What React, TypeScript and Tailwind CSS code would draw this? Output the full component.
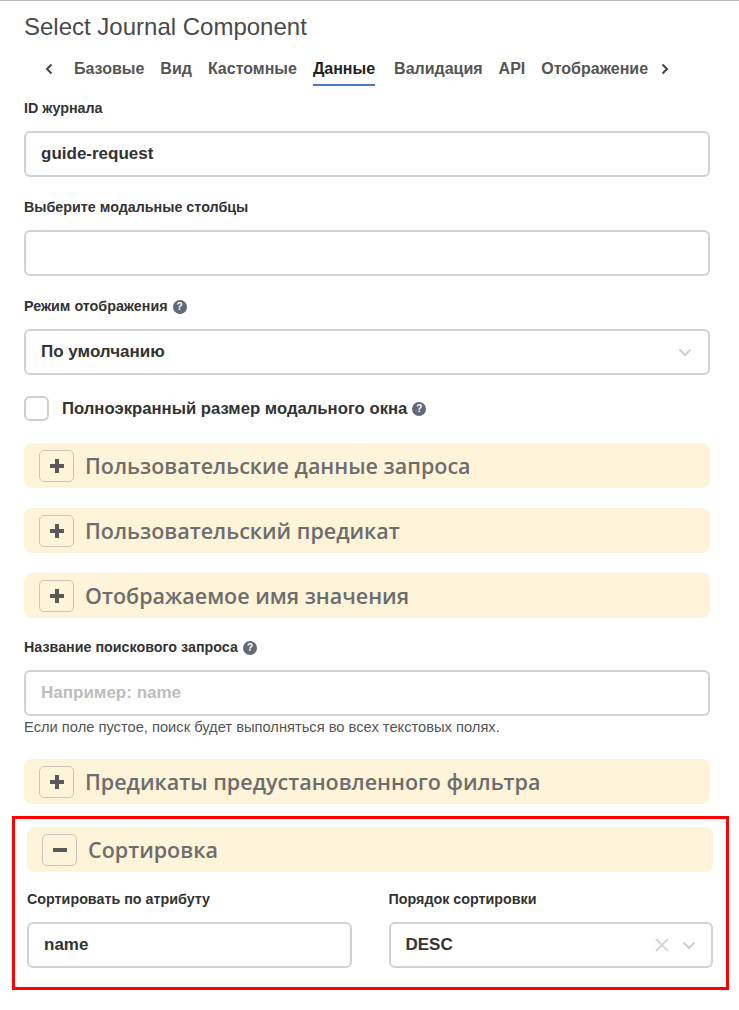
import React from "react";

const tabs = ["Базовые", "Вид", "Кастомные", "Данные", "Валидация", "API", "Отображение"];

const Help = () => (
  <span className="inline-flex items-center justify-center w-[14px] h-[14px] rounded-full bg-[#626a73] text-white text-[10px] font-bold leading-none ml-[5px] shrink-0">
    ?
  </span>
);

const Chevron = ({ className = "" }: { className?: string }) => (
  <svg width="14" height="9" viewBox="0 0 14 9" className={className}>
    <path d="M1.5 1.5 L7 7 L12.5 1.5" fill="none" stroke="#cfcfcf" strokeWidth="2" />
  </svg>
);

const Label = ({ children }: { children: React.ReactNode }) => (
  <div className="h-[20px] flex items-center text-[14.3px] font-bold text-[#333] mb-[12px]">{children}</div>
);

const Input = ({ value, placeholder }: { value?: string; placeholder?: string }) => (
  <div className="h-[46px] border-2 border-[#d2d2d2] rounded-[6px] flex items-center px-[15px] text-[17px] font-bold">
    {value ? (
      <span className="text-[#333]">{value}</span>
    ) : (
      <span className="text-[#bdbdbd]">{placeholder}</span>
    )}
  </div>
);

const Panel = ({ title, open = false }: { title: string; open?: boolean }) => (
  <div className="h-[45px] bg-[#fef4d9] rounded-[8px] flex items-center pl-[15px]">
    <div className="w-[35px] h-[32px] border border-[#cac6bc] rounded-[5px] flex items-center justify-center shrink-0">
      <svg width="16" height="16" viewBox="0 0 16 16">
        <rect x="1" y="6" width="14" height="4" fill="#5a5a5a" />
        {!open && <rect x="6" y="1" width="4" height="14" fill="#5a5a5a" />}
      </svg>
    </div>
    <span
      className="ml-[11px] text-[21.5px] font-semibold text-[#6d6d6d] leading-none"
      style={{ fontFamily: "'Open Sans', sans-serif" }}
    >
      {title}
    </span>
  </div>
);

export default function App() {
  return (
    <div
      className="w-[739px] min-h-[1010px] bg-white border-t border-[#bdbdbd]"
      style={{ fontFamily: "'Liberation Sans', Arial, sans-serif" }}
    >
      <div className="pl-6 pr-[29px]">
        <div className="pt-[11px] text-[24px] leading-[30px] text-[#4a4a4a]">Select Journal Component</div>

        <div className="mt-[10px] flex items-end pl-[21px] text-[16px] font-bold">
          <div className="pt-[7px] pb-[7px] leading-[20px] mr-[21px] flex items-center h-[34px]">
            <svg width="8" height="12" viewBox="0 0 8 12">
              <path d="M6.5 1.5 L2 6 L6.5 10.5" fill="none" stroke="#444" strokeWidth="2" />
            </svg>
          </div>
          {tabs.map((t) => (
            <div
              key={t}
              className={
                t === "Данные"
                  ? "pt-[7px] pb-[5px] leading-[20px] mr-[19px] text-[#222] border-b-2 border-[#4a78c0]"
                  : "pt-[7px] pb-[5px] leading-[20px] mr-[16px] text-[#555] border-b-2 border-transparent"
              }
            >
              {t}
            </div>
          ))}
          <div className="pt-[7px] pb-[7px] leading-[20px] -ml-[3px] flex items-center h-[34px]">
            <svg width="8" height="12" viewBox="0 0 8 12">
              <path d="M1.5 1.5 L6 6 L1.5 10.5" fill="none" stroke="#444" strokeWidth="2" />
            </svg>
          </div>
        </div>

        <div className="mt-[13px]">
          <Label>ID журнала</Label>
          <Input value="guide-request" />
        </div>

        <div className="mt-[21px]">
          <Label>Выберите модальные столбцы</Label>
          <Input />
        </div>

        <div className="mt-[21px]">
          <Label>
            Режим отображения
            <Help />
          </Label>
          <div className="h-[46px] border-2 border-[#d2d2d2] rounded-[6px] flex items-center justify-between pl-[15px] pr-[16px] text-[17px] font-bold text-[#333]">
            <span>По умолчанию</span>
            <Chevron />
          </div>
        </div>

        <div className="mt-[21px] flex items-center h-[25px]">
          <div className="w-[25px] h-[25px] border-2 border-[#cfcfcf] rounded-[6px]" />
          <span className="ml-[13px] text-[16.7px] font-bold text-[#333] flex items-center">
            Полноэкранный размер модального окна
            <Help />
          </span>
        </div>

        <div className="mt-[22px] flex flex-col gap-[20px]">
          <Panel title="Пользовательские данные запроса" />
          <Panel title="Пользовательский предикат" />
          <Panel title="Отображаемое имя значения" />
        </div>

        <div className="mt-[20px]">
          <Label>
            Название поискового запроса
            <Help />
          </Label>
          <Input placeholder="Например: name" />
          <div className="mt-[2px] text-[14.7px] leading-[18px] text-[#555]">
            Если поле пустое, поиск будет выполняться во всех текстовых полях.
          </div>
        </div>

        <div className="mt-[23px]">
          <Panel title="Предикаты предустановленного фильтра" />
        </div>

        <div className="mt-[12px] -ml-3 -mr-[19px] border-[3px] border-[#ff0000] pt-[8px] pb-[19px] pl-[12px] pr-[13px]">
          <Panel title="Сортировка" open />
          <div className="mt-[18px] grid grid-cols-2 gap-[37px]">
            <div>
              <Label>Сортировать по атрибуту</Label>
              <Input value="name" />
            </div>
            <div>
              <Label>Порядок сортировки</Label>
              <div className="h-[46px] border-2 border-[#d2d2d2] rounded-[6px] flex items-center pl-[15px] pr-[15px] text-[17px] font-bold text-[#333]">
                <span className="flex-1">DESC</span>
                <svg width="14" height="14" viewBox="0 0 14 14" className="mr-[13px]">
                  <path d="M1 1 L13 13 M13 1 L1 13" fill="none" stroke="#d6d6d6" strokeWidth="2" />
                </svg>
                <Chevron />
              </div>
            </div>
          </div>
        </div>
      </div>
    </div>
  );
}
